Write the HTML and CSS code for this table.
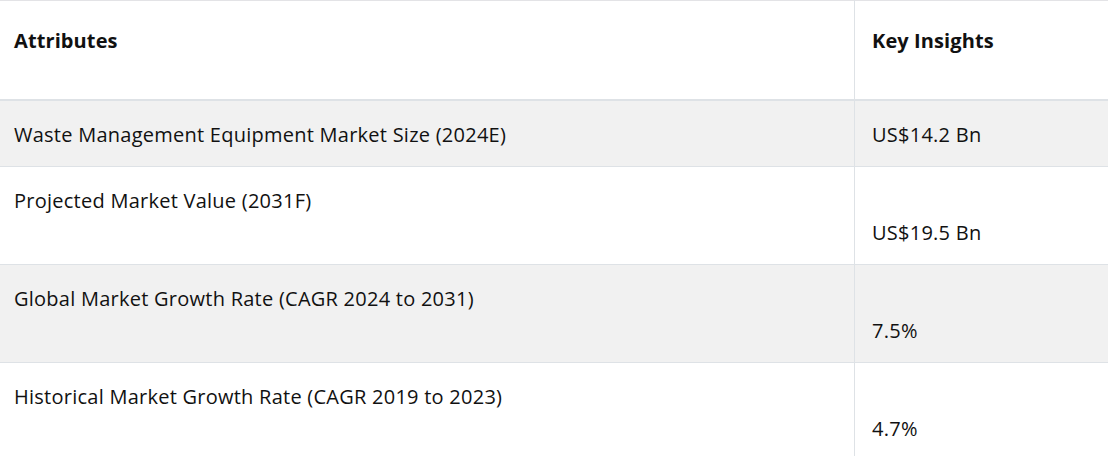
FILE: index.html
```html
<!DOCTYPE html>
<html lang="en">
<head>
<meta charset="utf-8">
<title>Waste Management Equipment Market</title>
<link rel="stylesheet" href="styles.css">
</head>
<body>
<table class="insights">
  <thead>
    <tr class="head-row">
      <th class="cell-attr">Attributes</th>
      <th class="cell-val">Key Insights</th>
    </tr>
  </thead>
  <tbody>
    <tr class="row-alt">
      <td class="cell-attr">Waste Management Equipment Market Size (2024E)</td>
      <td class="cell-val">US$14.2 Bn</td>
    </tr>
    <tr>
      <td class="cell-attr">Projected Market Value (2031F)</td>
      <td class="cell-val"><br>US$19.5 Bn</td>
    </tr>
    <tr class="row-alt">
      <td class="cell-attr">Global Market Growth Rate (CAGR 2024 to 2031)</td>
      <td class="cell-val"><br>7.5%</td>
    </tr>
    <tr>
      <td class="cell-attr">Historical Market Growth Rate (CAGR 2019 to 2023)</td>
      <td class="cell-val"><br>4.7%</td>
    </tr>
  </tbody>
</table>
</body>
</html>
```

FILE: styles.css
```css
html, body {
  margin: 0;
  padding: 0;
  background: #ffffff;
}

body {
  font-family: "Open Sans", "Noto Sans", "Liberation Sans", sans-serif;
  font-size: 20px;
  letter-spacing: 0.25px;
  color: #111111;
}

.insights {
  width: 1108px;
  border-collapse: collapse;
  border-top: 1px solid #e3e3e6;
  table-layout: fixed;
}

.insights th,
.insights td {
  line-height: 32px;
  text-align: left;
  font-weight: 400;
}

.head-row th {
  font-weight: 700;
  letter-spacing: 0.1px;
  padding: 24px 14px 42px;
  vertical-align: top;
  border-bottom: 2px solid #dee2e6;
}

.insights td {
  padding: 18px 14px 15px;
  border-bottom: 1px solid #dee2e6;
}

.cell-attr {
  width: 826px;
  vertical-align: top;
}

.cell-val {
  border-left: 1px solid #dee2e6;
  vertical-align: top;
}

.insights th.cell-val,
.insights td.cell-val {
  padding-left: 17px;
}

.row-alt td {
  background: #f1f1f1;
}
```
